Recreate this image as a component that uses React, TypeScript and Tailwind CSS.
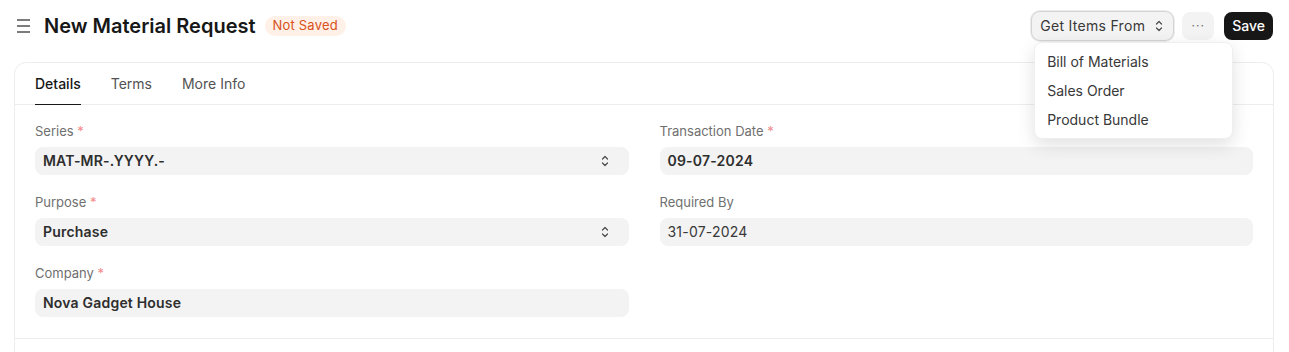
import { ReactNode } from 'react';

const font = { fontFamily: 'Inter, "Noto Sans", sans-serif' };

function UpDown({ className = '' }: { className?: string }) {
  return (
    <svg className={className} width="8" height="12" viewBox="0 0 8 12" fill="none">
      <path d="M1.5 4 L4 1.5 L6.5 4" stroke="currentColor" strokeWidth="1.2" strokeLinecap="round" strokeLinejoin="round" />
      <path d="M1.5 8 L4 10.5 L6.5 8" stroke="currentColor" strokeWidth="1.2" strokeLinecap="round" strokeLinejoin="round" />
    </svg>
  );
}

function Field({
  label,
  required,
  value,
  bold,
  select,
}: {
  label: string;
  required?: boolean;
  value: string;
  bold?: boolean;
  select?: boolean;
}) {
  return (
    <div className="flex flex-col">
      <div className="text-[13px] leading-4 text-[#6f6f6f] mb-2">
        {label}
        {required && <span className="text-[#f28b8b]"> *</span>}
      </div>
      <div className="h-7 rounded-lg bg-[#f3f3f3] px-2 flex items-center justify-between">
        <span
          className={
            bold
              ? 'text-sm font-semibold text-[#2e2e2e] tracking-[0.2px]'
              : 'text-sm text-[#383838] tracking-[0.2px]'
          }
        >
          {value}
        </span>
        {select && <UpDown className="text-[#4a4a4a] mr-3" />}
      </div>
    </div>
  );
}

function MenuItem({ children }: { children: ReactNode }) {
  return <div className="h-[29px] px-2 flex items-center text-sm text-[#383838] rounded">{children}</div>;
}

export default function App() {
  return (
    <div className="h-[352px] w-[1289px] overflow-hidden bg-white" style={font}>
      {/* Header */}
      <div className="h-[52px] flex items-center justify-between pl-[17px] pr-[16px]">
        <div className="flex items-center">
          <div className="flex flex-col gap-[4.5px] w-[13px]">
            <span className="h-[1.5px] bg-[#7c7c7c]" />
            <span className="h-[1.5px] bg-[#7c7c7c]" />
            <span className="h-[1.5px] bg-[#7c7c7c]" />
          </div>
          <h1 className="ml-[14px] text-xl font-semibold text-[#171717]">New Material Request</h1>
          <span className="ml-[9px] h-5 px-2 rounded-full bg-[#fff1e7] text-[13px] text-[#d9501c] tracking-[0.2px] flex items-center">
            Not Saved
          </span>
        </div>
        <div className="flex items-center">
          <div className="relative">
            <button className="h-7 pl-2 pr-[10px] rounded-lg bg-[#f3f3f3] ring-1 ring-[#d4d4d4] shadow-[0_0_0_2px_#ececec] flex items-center gap-[10px] text-sm text-[#383838] tracking-[0.3px]">
              Get Items From
              <UpDown className="text-[#4a4a4a]" />
            </button>
            <div className="absolute left-[2px] top-[30px] w-[199px] p-1 bg-white rounded-lg border border-[#efefef] shadow-[0_6px_18px_rgba(0,0,0,0.12)] z-10">
              <MenuItem>Bill of Materials</MenuItem>
              <MenuItem>Sales Order</MenuItem>
              <MenuItem>Product Bundle</MenuItem>
            </div>
          </div>
          <button className="ml-[9px] h-7 w-8 rounded-lg bg-[#f3f3f3] flex items-center justify-center text-[#6f6f6f] text-xs tracking-[1px]">
            ···
          </button>
          <button className="ml-[10px] h-7 px-[8px] rounded-lg bg-[#171717] text-white text-sm font-medium">Save</button>
        </div>
      </div>

      {/* Form card */}
      <div className="mt-[10px] ml-[14px] w-[1260px] rounded-xl border border-[#ededed]">
        <div className="h-[42px] border-b border-[#ededed] flex items-stretch gap-[30px] px-5">
          <div className="relative flex items-center text-sm font-medium text-[#171717]">
            Details
            <span className="absolute left-0 right-0 bottom-[-1px] h-px bg-[#171717]" />
          </div>
          <div className="flex items-center text-sm text-[#525252]">Terms</div>
          <div className="flex items-center text-sm text-[#525252]">More Info</div>
        </div>

        <div className="grid grid-cols-2 gap-x-[31px] px-5 pt-[18px] pb-[21px] border-b border-[#ededed]">
          <div className="flex flex-col gap-[19px]">
            <Field label="Series" required value="MAT-MR-.YYYY.-" bold select />
            <Field label="Purpose" required value="Purchase" bold select />
            <Field label="Company" required value="Nova Gadget House" bold />
          </div>
          <div className="flex flex-col gap-[19px]">
            <Field label="Transaction Date" required value="09-07-2024" bold />
            <Field label="Required By" value="31-07-2024" />
          </div>
        </div>
        <div className="h-[120px]" />
      </div>
    </div>
  );
}
